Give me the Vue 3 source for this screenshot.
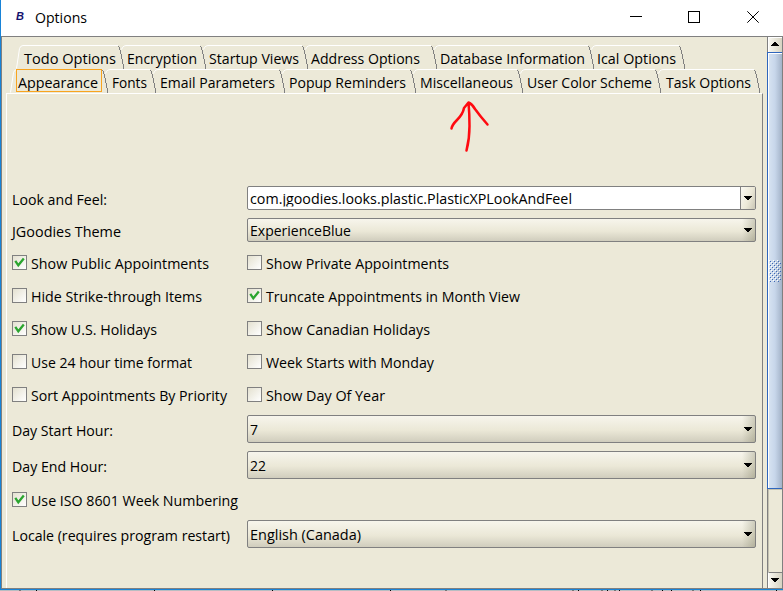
<script setup>
import { reactive } from 'vue'

const tabRows = [
  { start: 17, tabs: [
    { text: 'Todo Options', w: 106, pad: 7, tw: 92 },
    { text: 'Encryption', w: 82, pad: 4, tw: 70 },
    { text: 'Startup Views', w: 102, pad: 4, tw: 90 },
    { text: 'Address Options', w: 129, pad: 4, tw: 109 },
    { text: 'Database Information', w: 157, pad: 4, tw: 145 },
    { text: 'Ical Options', w: 91, pad: 4, tw: 79 },
  ] },
  { start: 11, tabs: [
    { text: 'Appearance', w: 96, pad: 7, tw: 80, active: true },
    { text: 'Fonts', w: 48, pad: 5, tw: 35 },
    { text: 'Email Parameters', w: 129, pad: 5, tw: 115 },
    { text: 'Popup Reminders', w: 131, pad: 5, tw: 117 },
    { text: 'Miscellaneous', w: 107, pad: 5, tw: 93 },
    { text: 'User Color Scheme', w: 138, pad: 5, tw: 125 },
    { text: 'Task Options', w: 99, pad: 6, tw: 85 },
  ] },
]

const rows = reactive([
  { kind: 'combo', h: 32, label: 'Look and Feel:', lw: 95, value: 'com.jgoodies.looks.plastic.PlasticXPLookAndFeel', vw: 322, editable: true },
  { kind: 'combo', h: 32, label: 'JGoodies Theme', lw: 109, value: 'ExperienceBlue', vw: 101 },
  { kind: 'check', h: 33, items: [{ text: 'Show Public Appointments', w: 178, on: true }, { text: 'Show Private Appointments', w: 183, on: false }] },
  { kind: 'check', h: 33, items: [{ text: 'Hide Strike-through Items', w: 171, on: false }, { text: 'Truncate Appointments in Month View', w: 254, on: true }] },
  { kind: 'check', h: 33, items: [{ text: 'Show U.S. Holidays', w: 126, on: true }, { text: 'Show Canadian Holidays', w: 164, on: false }] },
  { kind: 'check', h: 33, items: [{ text: 'Use 24 hour time format', w: 161, on: false }, { text: 'Week Starts with Monday', w: 168, on: false }] },
  { kind: 'check', h: 33, items: [{ text: 'Sort Appointments By Priority', w: 196, on: false }, { text: 'Show Day Of Year', w: 119, on: false }] },
  { kind: 'combo', h: 36, label: 'Day Start Hour:', lw: 101, value: '7', vw: 8, tall: true },
  { kind: 'combo', h: 36, label: 'Day End Hour:', lw: 95, value: '22', vw: 16, tall: true },
  { kind: 'check', h: 33, items: [{ text: 'Use ISO 8601 Week Numbering', w: 207, on: true }] },
  { kind: 'combo', h: 36, label: 'Locale (requires program restart)', lw: 218, value: 'English (Canada)', vw: 111, tall: true },
])

const specks = [36, 154, 272, 390, 578, 607, 619, 662, 671, 700, 776]
const softSpecks = [19, 445, 572, 601, 614, 651, 692]
</script>

<template>
  <div class="window">
    <header class="titlebar">
      <span class="logo">B</span>
      <svg class="txt title" width="54" height="20"><text x="0" y="15" textLength="52" lengthAdjust="spacingAndGlyphs">Options</text></svg>
      <svg class="controls" width="131" height="20" viewBox="0 0 131 20" fill="none" stroke="#000">
        <path d="M0 9.5H12M58.5 4.5h11v11h-11z" shape-rendering="crispEdges" />
        <path d="M117.3 4.3l11.4 11.4M128.7 4.3l-11.4 11.4" />
      </svg>
    </header>

    <main class="body">
      <section class="content">
        <nav class="tabs">
          <div v-for="(row, r) in tabRows" :key="r" class="tab-row" :class="{ front: r === 1 }">
            <div v-for="(tab, i) in row.tabs" :key="tab.text" class="tab" :style="{ width: tab.w + 'px', paddingLeft: tab.pad + 'px' }">
              <svg class="edge" :width="tab.w + 2" height="24" fill="none">
                <path v-if="i === 0" :d="`M-1.5 23.5L1.5 3.5Q2.5 .5 5 .5H${tab.w - 6}`" stroke="#fff" />
                <path v-else :d="`M-2.5 4.5L-1.5 2.5Q0 .5 2 .5H${tab.w - 6}`" stroke="#fff" />
                <path :d="`M${tab.w - 5.5} 1v1M${tab.w - 4.5} 2v3M${tab.w - 3.5} 5v4M${tab.w - 2.5} 9v5M${tab.w - 1.5} 14v5M${tab.w - .5} 19v5`" stroke="#808080" shape-rendering="crispEdges" />
              </svg>
              <span v-if="tab.active" class="focus"></span>
              <svg class="txt" :width="tab.tw + 2" height="20"><text x="0" y="15" :textLength="tab.tw" lengthAdjust="spacingAndGlyphs">{{ tab.text }}</text></svg>
            </div>
          </div>
        </nav>

        <div class="panel">
          <div v-for="(row, r) in rows" :key="r" class="row" :style="{ height: row.h + 'px' }">
            <template v-if="row.kind === 'combo'">
              <svg class="txt label" :width="row.lw + 2" height="20"><text x="0" y="15" :textLength="row.lw" lengthAdjust="spacingAndGlyphs">{{ row.label }}</text></svg>
              <div class="combo" :class="{ editable: row.editable, tall: row.tall }">
                <svg class="txt" :width="row.vw + 2" height="20"><text x="0" y="15" :textLength="row.vw" lengthAdjust="spacingAndGlyphs">{{ row.value }}</text></svg>
                <span class="drop">
                  <svg width="8" height="4" shape-rendering="crispEdges"><path d="M0 0h8v1H0zM1 1h6v1H1zM2 2h4v1H2zM3 3h2v1H3z" /></svg>
                </span>
              </div>
            </template>
            <template v-else>
              <div v-for="item in row.items" :key="item.text" class="check" @click="item.on = !item.on">
                <span class="box">
                  <svg v-if="item.on" width="13" height="13" fill="none" stroke="#2ba52f" stroke-width="2.3"><path d="M2.3 4.8L5.3 9.3 10.8 2.6" /></svg>
                </span>
                <svg class="txt" :width="item.w + 2" height="20"><text x="0" y="15" :textLength="item.w" lengthAdjust="spacingAndGlyphs">{{ item.text }}</text></svg>
              </div>
            </template>
          </div>
        </div>
      </section>

      <aside class="scroll">
        <div class="arrow-btn up">
          <svg width="8" height="4" shape-rendering="crispEdges"><path d="M3 0h2v1H3zM2 1h4v1H2zM1 2h6v1H1zM0 3h8v1H0z" /></svg>
        </div>
        <div class="thumb">
          <svg width="12" height="22" shape-rendering="crispEdges">
            <defs>
              <pattern id="grip" width="4" height="4" patternUnits="userSpaceOnUse">
                <path d="M0 0h1v1H0zM2 2h1v1H2z" fill="#fff" />
                <path d="M1 1h1v1H1zM3 3h1v1H3z" fill="#3e67b3" />
              </pattern>
            </defs>
            <rect width="12" height="22" fill="url(#grip)" />
          </svg>
        </div>
        <div class="track"></div>
        <div class="arrow-btn down">
          <svg width="8" height="4" shape-rendering="crispEdges"><path d="M0 0h8v1H0zM1 1h6v1H1zM2 2h4v1H2zM3 3h2v1H3z" /></svg>
        </div>
      </aside>
    </main>

    <svg class="base" width="783" height="1" shape-rendering="crispEdges">
      <rect width="783" height="1" fill="#b9bdc1" />
      <rect v-for="x in softSpecks" :key="x" :x="x" width="2" height="1" fill="#777" />
      <rect v-for="x in specks" :key="x" :x="x" width="1" height="1" fill="#000" />
    </svg>

    <svg class="pointer" width="44" height="56" fill="none" stroke="#ff0a10" stroke-width="2.5" stroke-linecap="round" stroke-linejoin="round">
      <path d="M4.5 29.5Q5 26 10 21Q16 15 17 9L21.5 3.5Q25 5 28 10Q33 17 40.5 25.5M21.5 3.5Q22.5 14 22.5 27Q22.5 40 19.5 51.5" />
    </svg>
  </div>
</template>

<style>
body {
  margin: 0;
  overflow: hidden;
}
</style>

<style scoped>
.window {
  position: relative;
  display: flex;
  flex-direction: column;
  width: 783px;
  height: 591px;
  background: #fff;
  font-family: "Open Sans", "Noto Sans", sans-serif;
  font-size: 14.7px;
  color: #000;
}
.window * { box-sizing: border-box; }
.window svg { display: block; flex: none; }
.txt { overflow: visible; fill: #000; }
.titlebar {
  display: flex;
  height: 36px;
  padding: 0 22px 0 15px;
  border-left: 1px solid #1883d7;
}
.logo {
  width: 19px;
  padding-top: 9px;
  font: italic bold 11px/14px "Liberation Sans", sans-serif;
  color: #14126e;
}
.title { margin-top: 8px; }
.controls { margin: 7px 0 0 auto; }
.body {
  display: flex;
  height: 553px;
  border: solid #808080;
  border-width: 1px 0 1px 1px;
  box-shadow: 0 1px #1883d7;
  margin-left: 1px;
  background: #ece9d8;
}
.window::before {
  content: "";
  position: absolute;
  left: 0;
  top: 0;
  width: 1px;
  height: 590px;
  background: #1883d7;
}
.content {
  width: 765px;
  padding-top: 8px;
}
.tab-row {
  display: flex;
  height: 24px;
  padding-left: 15px;
}
.tab-row.front { padding-left: 9px; }
.tab {
  position: relative;
  padding-top: 4px;
}
.edge {
  position: absolute;
  left: 1px;
  top: 0;
  overflow: visible;
}
.focus {
  position: absolute;
  left: 5px;
  top: 0;
  width: 86px;
  height: 23px;
  border: 1px solid #f8a41f;
}
.panel {
  width: 757px;
  height: 495px;
  margin-left: 4px;
  padding: 88px 0 0 5px;
  border: solid #fff;
  border-width: 1px 0 0 1px;
  border-right: 1px solid #808080;
}
.row {
  display: flex;
  align-items: center;
}
.label { margin-top: 3px; }
.row > .label + .combo { margin-left: auto; }
.combo {
  display: flex;
  justify-content: space-between;
  width: 509px;
  height: 24px;
  margin-right: 6px;
  padding-left: 2px;
  align-items: center;
  border: 1px solid #808080;
  border-radius: 2px;
  background: linear-gradient(to left, rgba(110, 110, 80, .3), transparent 13px), linear-gradient(#f7f5ec, #ebe8d7 55%, #d0cdbd);
}
.combo.tall { height: 28px; }
.combo .txt { margin-top: 1px; }
.combo.editable { background: #fff; }
.editable > .txt { clip-path: inset(0 0 2px 0); }
.drop {
  display: flex;
  align-items: center;
  justify-content: center;
  width: 15px;
  height: 100%;
}
.editable .drop {
  border-left: 1px solid #808080;
  background: linear-gradient(110deg, #faf9f2, #ece9d8 55%, #c9c6b5);
}
.check {
  display: flex;
  align-items: center;
  gap: 4px;
  width: 235px;
}
.check + .check { width: 400px; }
.check .txt { margin-top: 2px; }
.box {
  width: 15px;
  height: 15px;
  border: 1px solid #808080;
  background: linear-gradient(135deg, #e4e1d0, #fff);
}
.scroll {
  width: 16px;
  height: 551px;
  border: solid #808080;
  border-width: 0 1px;
}
.arrow-btn {
  display: flex;
  align-items: center;
  justify-content: center;
  height: 15px;
  padding: 0 1px 2px 0;
  border-left: 1px solid #fff;
  border-top: 1px solid #fff;
  background: linear-gradient(90deg, #f8f7f0, #d6d3c2);
}
.down { height: 16px; border-top-color: #808080; }
.thumb {
  display: flex;
  align-items: center;
  justify-content: center;
  height: 437px;
  margin-left: -1px;
  border: solid #2f66bd;
  border-width: 1px 0 1px 1px;
  box-shadow: inset 1px 1px #fff;
  background: linear-gradient(90deg, #d8e4f2, #c7d6ea 50%, #a3b3c8);
}
.track {
  height: 83px;
  border-left: 1px solid #c5c2b2;
  box-shadow: inset 0 1px #c5c2b2;
}
.base { margin-top: 1px; }
.pointer {
  position: absolute;
  left: 447px;
  top: 99px;
}
</style>
